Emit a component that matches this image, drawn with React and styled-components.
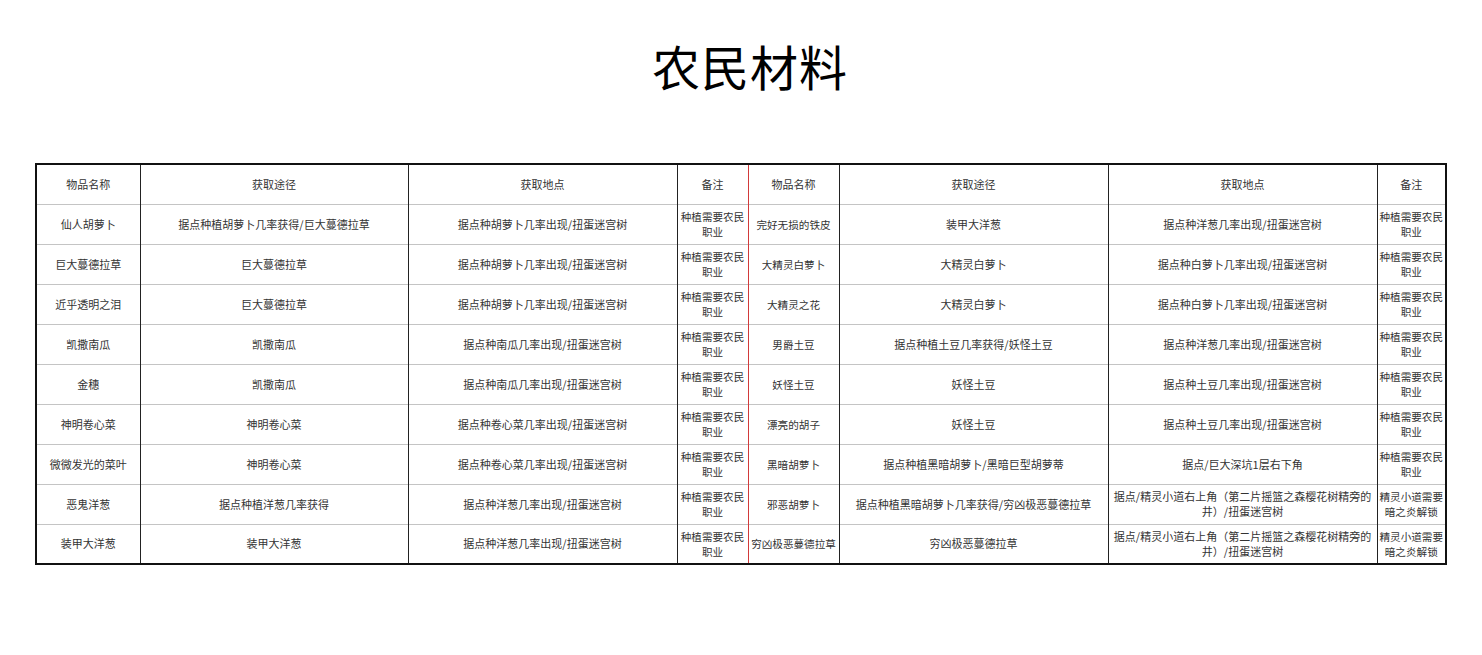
import React from 'react';
import styled, { createGlobalStyle } from 'styled-components';

const GlobalStyle = createGlobalStyle`
  html, body {
    margin: 0;
    padding: 0;
    background: #fff;
  }
  body {
    font-family: "Noto Sans CJK SC", "Noto Sans", sans-serif;
  }
`;

const leftRows = [
  ['仙人胡萝卜', '据点种植胡萝卜几率获得/巨大蔓德拉草', '据点种胡萝卜几率出现/扭蛋迷宫树', '种植需要农民职业'],
  ['巨大蔓德拉草', '巨大蔓德拉草', '据点种胡萝卜几率出现/扭蛋迷宫树', '种植需要农民职业'],
  ['近乎透明之泪', '巨大蔓德拉草', '据点种胡萝卜几率出现/扭蛋迷宫树', '种植需要农民职业'],
  ['凯撒南瓜', '凯撒南瓜', '据点种南瓜几率出现/扭蛋迷宫树', '种植需要农民职业'],
  ['金穗', '凯撒南瓜', '据点种南瓜几率出现/扭蛋迷宫树', '种植需要农民职业'],
  ['神明卷心菜', '神明卷心菜', '据点种卷心菜几率出现/扭蛋迷宫树', '种植需要农民职业'],
  ['微微发光的菜叶', '神明卷心菜', '据点种卷心菜几率出现/扭蛋迷宫树', '种植需要农民职业'],
  ['恶鬼洋葱', '据点种植洋葱几率获得', '据点种洋葱几率出现/扭蛋迷宫树', '种植需要农民职业'],
  ['装甲大洋葱', '装甲大洋葱', '据点种洋葱几率出现/扭蛋迷宫树', '种植需要农民职业'],
];

const rightRows = [
  ['完好无损的铁皮', '装甲大洋葱', '据点种洋葱几率出现/扭蛋迷宫树', '种植需要农民职业'],
  ['大精灵白萝卜', '大精灵白萝卜', '据点种白萝卜几率出现/扭蛋迷宫树', '种植需要农民职业'],
  ['大精灵之花', '大精灵白萝卜', '据点种白萝卜几率出现/扭蛋迷宫树', '种植需要农民职业'],
  ['男爵土豆', '据点种植土豆几率获得/妖怪土豆', '据点种洋葱几率出现/扭蛋迷宫树', '种植需要农民职业'],
  ['妖怪土豆', '妖怪土豆', '据点种土豆几率出现/扭蛋迷宫树', '种植需要农民职业'],
  ['漂亮的胡子', '妖怪土豆', '据点种土豆几率出现/扭蛋迷宫树', '种植需要农民职业'],
  ['黑暗胡萝卜', '据点种植黑暗胡萝卜/黑暗巨型胡萝蒂', '据点/巨大深坑1层右下角', '种植需要农民职业'],
  ['邪恶胡萝卜', '据点种植黑暗胡萝卜几率获得/穷凶极恶蔓德拉草', '据点/精灵小道右上角（第二片摇篮之森樱花树精旁的井）/扭蛋迷宫树', '精灵小道需要暗之炎解锁'],
  ['穷凶极恶蔓德拉草', '穷凶极恶蔓德拉草', '据点/精灵小道右上角（第二片摇篮之森樱花树精旁的井）/扭蛋迷宫树', '精灵小道需要暗之炎解锁'],
];

const headers = ['物品名称', '获取途径', '获取地点', '备注'];
const widths = [104, 268, 269, 71, 91, 269, 269, 69];

function App() {
  return (
    <>
      <GlobalStyle />
      <Page>
        <Title>农民材料</Title>
        <Sheet>
          <colgroup>
            {widths.map((w, i) => <col key={i} style={{ width: w }} />)}
          </colgroup>
          <tbody>
            <Row>
              {headers.map((h, i) => <Cell key={'l' + i} $divider={i === 3}>{h}</Cell>)}
              {headers.map((h, i) => <Cell key={'r' + i}>{h}</Cell>)}
            </Row>
            {leftRows.map((row, r) => (
              <Row key={r}>
                {row.map((c, i) => (
                  <Cell key={'l' + i} $divider={i === 3} $tight={i === 3}>{c}</Cell>
                ))}
                {rightRows[r].map((c, i) => (
                  <Cell key={'r' + i} $tight={i === 0 || i === 3}>{c}</Cell>
                ))}
              </Row>
            ))}
          </tbody>
        </Sheet>
      </Page>
    </>
  );
}

const Page = styled.div`
  padding: 38px 0 0 35px;
  width: 1482px;
  box-sizing: border-box;
`;

const Title = styled.h1`
  margin: 0;
  width: 1430px;
  text-align: center;
  font-size: 48px;
  line-height: 54px;
  font-weight: 400;
  color: #000;
  letter-spacing: 1px;
`;

const Sheet = styled.table`
  margin-top: 71px;
  width: 1410px;
  table-layout: fixed;
  border-collapse: collapse;
  border: 2px solid #111;
`;

const Row = styled.tr`
  height: 40px;
  & + & td {
    border-top: 1px solid #c4c4c4;
  }
`;

const Cell = styled.td`
  padding: ${p => (p.$tight ? '0' : '0 4px')};
  border-left: 1px solid #222;
  border-right: ${p => (p.$divider ? '1px solid #d23a3a' : '1px solid #222')};
  text-align: center;
  vertical-align: middle;
  font-size: ${p => (p.$tight ? '10.6px' : '11px')};
  line-height: 15px;
  color: #333;
  word-break: break-all;
  overflow: hidden;
`;

export default App;
